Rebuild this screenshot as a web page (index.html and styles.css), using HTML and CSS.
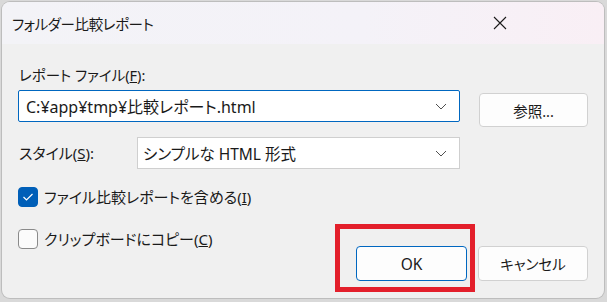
FILE: index.html
```html
<!DOCTYPE html>
<html lang="ja">
<head>
<meta charset="utf-8">
<title>フォルダー比較レポート</title>
<link rel="stylesheet" href="styles.css">
</head>
<body>
<div class="dialog">
  <div class="titlebar">
    <span class="title">フォルダー比較レポート</span>
    <svg class="close" width="14" height="14" viewBox="0 0 14 14"><path d="M1 1 L13 13 M13 1 L1 13" stroke="#1a1a1a" stroke-width="1.1" fill="none"/></svg>
  </div>
  <div class="content">
    <div class="label">レポート ファイル(<u>F</u>):</div>
    <div class="row row-file">
      <div class="combo focused">
        <span class="value">C:¥app¥tmp¥比較レポート.html</span>
        <svg class="chev" width="12" height="7" viewBox="0 0 12 7"><path d="M1 1 L6 6 L11 1" stroke="#505050" stroke-width="1" fill="none"/></svg>
      </div>
      <button class="btn browse">参照...</button>
    </div>
    <div class="row row-style">
      <div class="style-label">スタイル(<u>S</u>):</div>
      <div class="combo select">
        <span class="value">シンプルな HTML 形式</span>
        <svg class="chev" width="12" height="7" viewBox="0 0 12 7"><path d="M1 1 L6 6 L11 1" stroke="#505050" stroke-width="1" fill="none"/></svg>
      </div>
    </div>
    <div class="check-row first">
      <span class="box checked"><svg width="12" height="10" viewBox="0 0 12 10"><path d="M1.5 5 L4.5 8 L10.5 2" stroke="#fff" stroke-width="1.2" fill="none"/></svg></span>
      <span class="check-text">ファイル比較レポートを含める(<u>I</u>)</span>
    </div>
    <div class="bottom">
      <div class="check-row">
        <span class="box"></span>
        <span class="check-text">クリップボードにコピー(<u>C</u>)</span>
      </div>
      <div class="buttons">
        <button class="btn ok">OK</button>
        <button class="btn cancel">キャンセル</button>
      </div>
    </div>
  </div>
  <div class="highlight"></div>
</div>
</body>
</html>
```
FILE: styles.css
```css
html, body {
  margin: 0;
  padding: 0;
}
body {
  width: 607px;
  height: 302px;
  background: #d9d9d9;
  overflow: hidden;
  font-family: "Noto Sans", "Noto Sans CJK JP", sans-serif;
  font-feature-settings: "palt";
  color: #1a1a1a;
}
.dialog {
  position: relative;
  box-sizing: border-box;
  width: 602px;
  height: 296px;
  margin: 2px 0 0 2px;
  background: #f0f0f0;
  border-radius: 8px;
  box-shadow: 0 0 0 1px #bdbdbd;
  overflow: hidden;
}
.titlebar {
  height: 42px;
  display: flex;
  align-items: center;
  justify-content: space-between;
  background: linear-gradient(90deg, #f3f3f7 0%, #f4f2f8 60%, #f9eff5 100%);
  padding: 0 97px 0 10px;
}
.title {
  font-size: 14.5px;
  letter-spacing: -0.4px;
}
.close {
  display: block;
}
.content {
  padding: 21px 16px 0 16px;
}
.label {
  height: 20px;
  line-height: 20px;
  font-size: 14.5px;
  margin-left: 1px;
}
.row {
  display: flex;
  align-items: flex-start;
  height: 32px;
}
.row-file {
  margin-top: 5px;
}
.combo {
  box-sizing: border-box;
  height: 32px;
  background: #fff;
  border: 1px solid #cfcfcf;
  display: flex;
  align-items: center;
  justify-content: space-between;
  padding: 0 12px 0 7px;
}
.combo.focused {
  width: 442px;
  border-color: #0067c0;
  border-radius: 2px;
}
.combo .value {
  font-size: 16px;
}
.select {
  width: 323px;
  padding-left: 5px;
}
.select .value {
  font-size: 15.5px;
}
.chev {
  display: block;
}
.btn {
  box-sizing: border-box;
  background: #fdfdfd;
  border: 1px solid #d1d1d1;
  border-radius: 4px;
  font-family: inherit;
  font-feature-settings: "palt";
  font-size: 14.5px;
  color: #1a1a1a;
  padding: 0;
}
.browse {
  width: 109px;
  height: 34px;
  margin: 3px 0 0 19px;
}
.row-style {
  margin-top: 15px;
}
.style-label {
  width: 119px;
  line-height: 32px;
  font-size: 15px;
  padding-left: 1px;
  box-sizing: border-box;
}
.check-row {
  display: flex;
  align-items: center;
  height: 20px;
}
.check-row.first {
  margin-top: 18px;
}
.box {
  box-sizing: border-box;
  width: 20px;
  height: 20px;
  border: 1px solid #8a8a8a;
  border-radius: 4px;
  background: #fbfbfb;
  display: flex;
  align-items: center;
  justify-content: center;
  flex: none;
}
.box.checked {
  background: #005fb8;
  border-color: #005fb8;
}
.check-text {
  margin-left: 6px;
  font-size: 15px;
  line-height: 20px;
}
.bottom {
  display: flex;
  justify-content: space-between;
  align-items: flex-start;
  margin-top: 22px;
}
.buttons {
  display: flex;
  gap: 11px;
  margin-top: 17px;
}
.ok {
  width: 111px;
  height: 35px;
  border-color: #0067c0;
  background: #fdfdfd;
  font-size: 15.5px;
}
.cancel {
  width: 110px;
  height: 35px;
}
.highlight {
  position: absolute;
  left: 333px;
  top: 222px;
  width: 140px;
  height: 68px;
  box-sizing: border-box;
  border: 5px solid #e31f2b;
}
```
